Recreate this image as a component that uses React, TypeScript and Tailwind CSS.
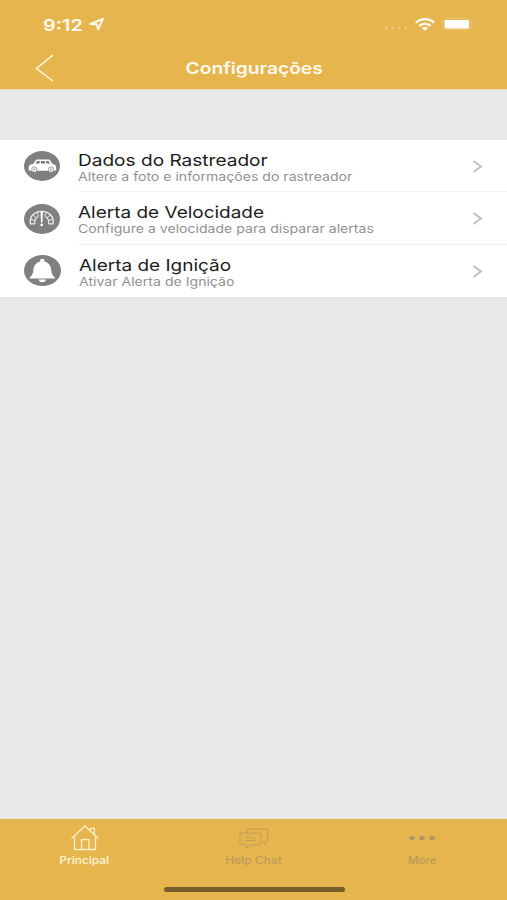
import type { ReactNode } from 'react';

function CarIcon() {
  return (
    <svg viewBox="0 0 36 30" className="block h-[30px] w-9">
      <ellipse cx="18" cy="15" rx="18" ry="15" fill="#808080" />
      <path
        d="M4.600 18.500c0-3.800.6-5 4.600-5.600l2.200-3.200c.6-.9 1.300-1.200 2.600-1.200h9.600c1.500 0 2.300.4 3 1.400l2 3c2.800.5 3.600 1.600 3.600 4.100v1.900l-1.200.9H5.600z"
        fill="#fff"
      />
      <path d="M11.400 12.600l1.300-2.100c.2-.4.500-.6 1.100-.6h1.900v2.700zM16.900 9.900h4.100v2.700h-4.100zM22.200 9.900h1.400c.6 0 1 .2 1.400.7l1.200 2h-4z" fill="#777" />
      <circle cx="10.300" cy="18.600" r="2.700" fill="#fff" stroke="#8a8a8a" strokeWidth=".8" />
      <circle cx="27" cy="18.600" r="2.700" fill="#fff" stroke="#8a8a8a" strokeWidth=".8" />
      <circle cx="10.300" cy="18.600" r="1" fill="#999" />
      <circle cx="27" cy="18.600" r="1" fill="#999" />
    </svg>
  );
}

function GaugeIcon() {
  return (
    <svg viewBox="0 0 36 30" className="block h-[30px] w-9">
      <ellipse cx="18" cy="15" rx="18" ry="15" fill="#808080" />
      <g fill="none" stroke="#f5f5f5">
        <path d="M10.800 19.800H6.500C5 13 10.200 7.400 17.700 7.400S30.400 13 28.900 19.800h-4.300" strokeWidth="1.300" />
        <path d="M10.800 19.800c-.6-4 1.200-6.300 3.600-7.300M24.600 19.800c.6-4-1.200-6.300-3.600-7.300" strokeWidth="1.100" />
        <path d="M7 15.500l3.800.8M9.500 11.300l2.800 2.200M13.200 8.600l1.400 3.500M22.200 8.600l-1.400 3.500M25.900 11.300l-2.800 2.200M28.400 15.500l-3.800.8" strokeWidth=".9" />
      </g>
      <path d="M16.500 8h2.400l-.5 10.400h-1.400z" fill="#fff" />
      <circle cx="17.700" cy="20.900" r="1.400" fill="#fff" />
    </svg>
  );
}

function BellIcon() {
  return (
    <svg viewBox="0 0 37 31" className="block h-[31px] w-[37px]">
      <ellipse cx="18.500" cy="15.500" rx="18.500" ry="15.500" fill="#808080" />
      <path
        d="M18.300 3.800c1.400 0 2.100.7 2.100 1.800v.8c4 1 6.200 3.700 6.700 7.500.4 3.800.8 5.900 3.600 8.500.6.600.3 1.200-.5 1.200H6.400c-.8 0-1.100-.6-.5-1.200 2.800-2.600 3.200-4.700 3.600-8.500.5-3.800 2.700-6.500 6.700-7.500v-.8c0-1.100.7-1.800 2.100-1.800z"
        fill="#fff"
      />
      <path d="M14.400 24.600h7.800c-.5 1.700-1.900 2.600-3.900 2.600s-3.400-.9-3.900-2.600z" fill="#fff" />
    </svg>
  );
}

function StatusBar() {
  return (
    <div className="flex h-[46px] items-start pl-[43px] pt-[15px]">
      <div className="w-[46px]">
        <span className="block w-max origin-left scale-x-[1.24] text-base/[20px] font-semibold">9:12</span>
      </div>
      <svg viewBox="0 0 17 15" className="mt-[2px] h-[15px] w-[17px]">
        <path d="M1.200 7L14 1.800 9 12.500 7.900 7.200z" fill="none" stroke="#fffaf0" strokeWidth="1.900" strokeLinejoin="round" />
      </svg>
      <svg viewBox="0 0 24 4" className="ml-[278px] mt-[11px] h-1 w-6" fill="#edc67b">
        <circle cx="2" cy="2" r="1.500" />
        <circle cx="8.500" cy="2" r="1.500" />
        <circle cx="15" cy="2" r="1.500" />
        <circle cx="21.500" cy="2" r="1.500" />
      </svg>
      <svg viewBox="0 0 20 13" className="ml-[7px] mt-[3px] h-[13px] w-5" fill="none" stroke="#fff" strokeWidth="2.200">
        <path d="M.8 4.700C5.900-.1 14.100-.1 19.200 4.700" />
        <path d="M4.300 7.900c3.200-2.900 8.200-2.900 11.400 0" />
        <path d="M10 12.800L6.800 10c1.800-1.500 4.600-1.500 6.400 0z" fill="#fff" stroke="none" />
      </svg>
      <svg viewBox="0 0 34 12" className="ml-[7px] mt-[3px] h-3 w-[34px]">
        <rect x=".5" y=".5" width="28.500" height="11" rx="3" fill="none" stroke="#ecc477" />
        <rect x="2.500" y="2" width="24.500" height="8.500" rx="1.200" fill="#fff" />
        <path d="M30.500 4v4c1.300-.6 1.800-1.200 1.800-2s-.5-1.400-1.800-2z" fill="#ecc477" />
      </svg>
    </div>
  );
}

type RowProps = {
  icon: ReactNode;
  title: ReactNode;
  subtitle: ReactNode;
  textClass: string;
  last?: boolean;
};

function Row({ icon, title, subtitle, textClass, last }: RowProps) {
  return (
    <div className="flex h-[52.400px] pl-6">
      <div className="flex w-[37px] shrink-0 items-center">{icon}</div>
      <div className={`flex flex-1 items-center pr-[24px] ${textClass} ${last ? '' : 'border-b border-[#f3f3f3]'}`}>
        <div className="flex flex-1 flex-col gap-px pt-[3.900px]">
          {title}
          {subtitle}
        </div>
        <svg viewBox="0 0 11 13" className="mt-[0.800px] h-[13px] w-[11px]">
          <path d="M1.500 1L9 6.500 1.500 12" fill="none" stroke="#bdbdbd" strokeWidth="1.900" />
        </svg>
      </div>
    </div>
  );
}

function TabBar() {
  return (
    <div className="h-[81px] bg-[#e6b54d] text-[10px]/[12px]">
      <div className="grid h-[67px] grid-cols-3">
        <div className="flex flex-col items-center pt-[5px] text-[#fff0cb]">
          <svg viewBox="0 0 30 27" className="h-[27px] w-[30px]" fill="none" stroke="currentColor" strokeWidth="1.300">
            <path d="M1.500 14.500L15 2l13.500 12.500" />
            <path d="M4.500 12v13.500h21V12M11.500 25.500v-9.800h7.500v9.800M20.500 6V4.300h3.800v5.500" />
          </svg>
          <span className="mt-[3px] scale-x-[1.17] font-semibold">Principal</span>
        </div>
        <div className="flex flex-col items-center pt-[9px] text-[#bd9c5b]">
          <svg viewBox="0 0 30 22" className="h-[22px] w-[30px]" fill="none" stroke="currentColor" strokeWidth="1">
            <path d="M8.500 4.700V2.500c0-1 .6-1.500 1.600-1.500h17c1 0 1.500.5 1.500 1.500v9.500c0 1-.8 1.500-1.800 1.500l-.5 2.700-2.800-2.200" />
            <path d="M2.500 5h18c1 0 1.500.5 1.500 1.500v8.800c0 1-.5 1.500-1.500 1.500h-8L7.500 20v-3.200h-5c-1 0-1.500-.5-1.500-1.500V6.500C1 5.500 1.500 5 2.500 5z" />
            <path d="M6.500 9.500h5M6.500 12.500h10.500M13 10.500h4" />
          </svg>
          <span className="mt-1 scale-x-[1.2] font-medium">Help Chat</span>
        </div>
        <div className="flex flex-col items-center pt-4 text-[#ac9665]">
          <svg viewBox="0 0 28 6" className="-ml-0.5 h-1.5 w-7" fill="currentColor">
            <ellipse cx="4" cy="3" rx="2.900" ry="2.100" />
            <ellipse cx="14" cy="3" rx="2.900" ry="2.100" />
            <ellipse cx="24" cy="3" rx="2.900" ry="2.100" />
          </svg>
          <span className="-ml-px mt-[13px] scale-x-[1.17] text-[#b3965c]">More</span>
        </div>
      </div>
      <div className="ml-[164px] mt-px h-[5px] w-[181px] rounded-full bg-[#765c29]" />
    </div>
  );
}

export default function App() {
  return (
    <div className="flex h-[900px] w-[507px] flex-col overflow-hidden bg-[#e8e8e8] font-['Inter','Liberation_Sans',sans-serif]">
      <header className="h-[90px] border-b border-[#f1dcae] bg-[#e6b54d] text-[#fffaf0]">
        <StatusBar />
        <div className="grid h-11 grid-cols-[1fr_auto_1fr] items-center">
          <svg viewBox="0 0 19 28" className="ml-[35px] h-7 w-[19px]">
            <path d="M18 1L1.500 14.500 18 27" fill="none" stroke="#fff8e8" strokeWidth="1.500" />
          </svg>
          <h1 className="ml-0.5 scale-x-[1.2] text-base font-semibold">Configurações</h1>
        </div>
      </header>

      <main className="flex-1 pt-[50px]">
        <div className="bg-white">
          <Row
            icon={<CarIcon />}
            textClass="ml-[16.500px]"
            title={<p className="w-max origin-left scale-x-[1.155] text-[16.500px]/[18px] text-[#1c1c1c]">Dados do Rastreador</p>}
            subtitle={<p className="w-max origin-left scale-x-[1.225] text-[11.500px]/[15px] text-[#929292]">Altere a foto e informações do rastreador</p>}
          />
          <Row
            icon={<GaugeIcon />}
            textClass="ml-[16.500px]"
            title={<p className="w-max origin-left scale-x-[1.15] text-[16.500px]/[18px] text-[#1c1c1c]">Alerta de Velocidade</p>}
            subtitle={<p className="w-max origin-left scale-x-[1.225] text-[11.500px]/[15px] text-[#929292]">Configure a velocidade para disparar alertas</p>}
          />
          <Row
            icon={<BellIcon />}
            textClass="ml-[18px]"
            title={<p className="w-max origin-left scale-x-[1.15] text-[16.500px]/[18px] text-[#1c1c1c]">Alerta de Ignição</p>}
            subtitle={<p className="w-max origin-left scale-x-[1.225] text-[11.500px]/[15px] text-[#929292]">Ativar Alerta de Ignição</p>}
            last
          />
        </div>
      </main>

      <TabBar />
    </div>
  );
}
